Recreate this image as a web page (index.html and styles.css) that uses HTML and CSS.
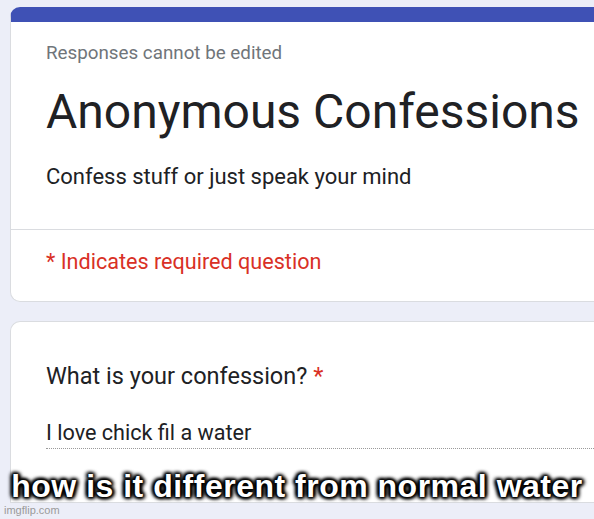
FILE: index.html
```html
<!DOCTYPE html>
<html>
<head>
<meta charset="utf-8">
<link rel="stylesheet" href="styles.css">
</head>
<body>
<div class="page">
  <div class="card header-card">
    <div class="header-main">
      <div class="note">Responses cannot be edited</div>
      <h1 class="title">Anonymous Confessions</h1>
      <div class="desc">Confess stuff or just speak your mind</div>
    </div>
    <div class="required-row">* Indicates required question</div>
  </div>
  <div class="card question-card">
    <div class="question">What is your confession? <span class="star">*</span></div>
    <div class="answer">I love chick fil a water</div>
  </div>
  <div class="watermark">imgflip.com</div>
  <div class="caption">how is it different from normal water</div>
</div>
</body>
</html>
```

FILE: styles.css
```css
html, body {
  margin: 0;
  padding: 0;
  width: 594px;
  height: 519px;
  overflow: hidden;
  background: #eceef8;
}
.page {
  position: relative;
  width: 594px;
  height: 519px;
  padding: 7px 0 0 10px;
  box-sizing: border-box;
  overflow: hidden;
  font-family: Roboto, "Liberation Sans", sans-serif;
  color: #202124;
}
.card {
  width: 584px;
  background: #fff;
  border: 1px solid #dadce0;
  border-right: none;
  box-sizing: border-box;
}
.header-card {
  height: 295px;
  border-top: 15px solid #3f51b5;
  border-radius: 10px 0 0 10px;
  display: flex;
  flex-direction: column;
}
.header-main {
  padding: 19px 0 0 35px;
  height: 208px;
  flex: none;
  box-sizing: border-box;
  border-bottom: 1px solid #dadce0;
}
.note {
  font-size: 18.8px;
  line-height: 24px;
  color: #70757a;
  white-space: nowrap;
}
.title {
  margin: 19px 0 0 0;
  font-size: 48px;
  font-weight: 400;
  line-height: 56px;
  color: #202124;
  white-space: nowrap;
}
.desc {
  margin-top: 23px;
  font-size: 22px;
  line-height: 28px;
  color: #202124;
  white-space: nowrap;
}
.required-row {
  padding: 18px 0 0 35px;
  font-size: 21.6px;
  line-height: 28px;
  color: #d93025;
  white-space: nowrap;
}
.question-card {
  margin-top: 19px;
  height: 182px;
  border-radius: 10px 0 0 0;
  border-bottom: 1px solid #dadce0;
  padding: 40px 0 0 35px;
}
.question {
  font-size: 23.5px;
  line-height: 28px;
  white-space: nowrap;
}
.star {
  color: #d93025;
}
.answer {
  margin-top: 30px;
  font-size: 21.6px;
  line-height: 26px;
  padding-bottom: 2px;
  border-bottom: 1px dotted #9a9a9a;
  white-space: nowrap;
}
.watermark {
  position: absolute;
  left: 4px;
  top: 503px;
  font-family: "Liberation Sans", Arial, sans-serif;
  font-size: 11px;
  line-height: 14px;
  color: #9a9a9a;
}
.caption {
  position: absolute;
  left: 0;
  top: 469px;
  width: 594px;
  text-align: center;
  font-family: "Liberation Sans", Arial, sans-serif;
  font-weight: 700;
  font-size: 32px;
  letter-spacing: 0.5px;
  line-height: 34px;
  color: #fff;
  white-space: nowrap;
  text-shadow: 0 0 2px #000, 0 0 3px #000, 0 0 4px #000, 0 0 5px #000, 1px 1px 4px #000, -1px -1px 4px #000, 2px 0 4px #000, -2px 0 4px #000;
}
```
